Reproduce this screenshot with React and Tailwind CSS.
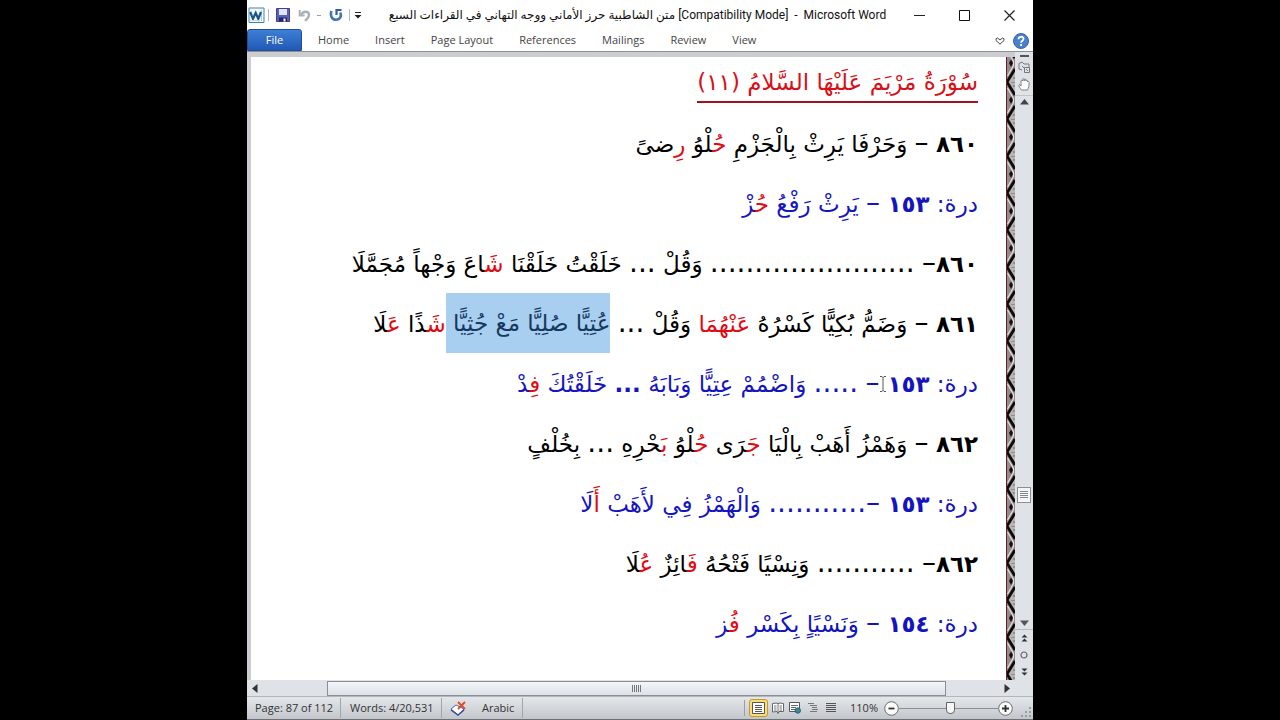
import { useState } from 'react';

const TABS = ['Home', 'Insert', 'Page Layout', 'References', 'Mailings', 'Review', 'View'];

// [text, tone]: tone is 'red' for the symbol letters, 'sel' for the selected words
const VERSES = [
  { color: 'black', parts: [['٨٦٠ – وَحَرْفَا يَرِثْ بِالْجَزْمِ '], ['حُ', 'red'], ['لْوُ '], ['رِ', 'red'], ['ضىً']] },
  { color: 'blue', parts: [['درة: ١٥٣ – يَرِثْ رَفْعُ '], ['حُ', 'red'], ['زْ']] },
  { color: 'black', parts: [['٨٦٠– ....................... وَقُلْ ... خَلَقْتُ خَلَقْنَا '], ['شَ', 'red'], ['اعَ وَجْهاً مُجَمَّلَا']] },
  { color: 'black', parts: [['٨٦١ – وَضَمُّ بُكِيًّا كَسْرُهُ '], ['عَنْهُمَا', 'red'], [' وَقُلْ ... '], ['عُتِيًّا صُلِيًّا مَعْ جُثِيًّا ', 'sel'], ['شَ', 'red'], ['ذًا '], ['عَ', 'red'], ['لَا']] },
  { color: 'blue', parts: [['درة: ١٥٣'], ['', 'cursor'], ['– ..... وَاضْمُمْ عِتِيًّا وَبَابَهُ '], ['...', 'bold'], [' خَلَقْتُكَ '], ['فِ', 'red'], ['دْ']] },
  { color: 'black', parts: [['٨٦٢ – وَهَمْزُ أَهَبْ بِالْيَا '], ['جَ', 'red'], ['رَى '], ['حُ', 'red'], ['لْوُ '], ['بَ', 'red'], ['حْرِهِ ... بِخُلْفٍ']] },
  { color: 'blue', parts: [['درة: ١٥٣ –........... وَالْهَمْزُ فِي لأَهَبْ '], ['أَ', 'red'], ['لَا']] },
  { color: 'black', parts: [['٨٦٢– ........... وَنِسْيًا فَتْحُهُ '], ['فَ', 'red'], ['ائِزٌ '], ['عُ', 'red'], ['لَا']] },
  { color: 'blue', parts: [['درة: ١٥٤ – وَنَسْيًاٍ بِكَسْر '], ['فُ', 'red'], ['ز']] },
];

function WordLogo() {
  return (
    <svg width="17" height="17" viewBox="0 0 17 17">
      <path d="M1 1h15v14.500H1z" fill="#f4fafd" stroke="#3f86b0" />
      <path d="M13.500 3v11" stroke="#a9cbe0" />
      <path d="M2.200 5 5 11.800 7.700 6 10.300 11.800 13 5" fill="none" stroke="#17578c" strokeWidth="2.200" />
      <path d="M2 13.500h10" stroke="#c7deec" />
    </svg>
  );
}

function SaveIcon() {
  return (
    <svg width="14" height="14" viewBox="0 0 14 14">
      <path d="M.5.5h13v13h-13z" fill="#5a5fb5" stroke="#3f4190" />
      <path d="M3 1h8v6H3z" fill="#dfe5f5" />
      <path d="M3 9.500h8v4H3z" fill="#23265c" />
      <path d="M7.500 10.500h2v3h-2z" fill="#fff" />
    </svg>
  );
}

function UndoIcon() {
  return (
    <svg width="13" height="13" viewBox="0 0 13 13" fill="none" stroke="#abafb7" strokeWidth="2.400">
      <path d="M3 6C5 2 10.500 1.500 11 5.500c.2 2.600-2 4.500-4 6.300" />
      <path d="M1.700 1v5.500h5" strokeWidth="2" />
    </svg>
  );
}

function RedoIcon() {
  return (
    <svg width="14" height="14" viewBox="0 0 14 14" fill="none" stroke="#4473b5" strokeWidth="2.600">
      <path d="M2.500 3C.8 7.500 3 11.700 7 11.700s6-3.700 4.200-7.200" />
      <path d="M12.500 2H7.500v5" stroke="#2f5e9f" strokeWidth="2.200" />
    </svg>
  );
}

function TitleBar() {
  return (
    <header className="flex h-[30px] shrink-0 items-center bg-white pl-[1px]">
      <div className="flex w-[120px] shrink-0 items-center">
        <WordLogo />
        <span className="ml-[3px] h-3 w-px bg-[#b5b8bd]" />
        <button className="ml-[7px]" aria-label="Save"><SaveIcon /></button>
        <button className="ml-2" aria-label="Undo"><UndoIcon /></button>
        <span className="ml-[6px] h-px w-1 bg-[#9a9da3]" />
        <button className="ml-2" aria-label="Repeat"><RedoIcon /></button>
        <span className="ml-[6px] h-3 w-px bg-[#b5b8bd]" />
        <button className="ml-1" aria-label="Customize Quick Access Toolbar">
          <svg width="8" height="8" viewBox="0 0 8 8"><path d="M1 1h6v1H1zM.5 4h7L4 7.500z" fill="#222" /></svg>
        </button>
      </div>
      <h1 className="min-w-0 flex-1 whitespace-nowrap pl-2 text-center font-[Roboto,'DejaVu_Sans',sans-serif] text-[12px] leading-4 text-[#111]">
        متن الشاطبية حرز الأماني ووجه التهاني في القراءات السبع [Compatibility Mode]&nbsp; -&nbsp; Microsoft Word
      </h1>
      <div className="flex w-[134px] shrink-0 items-center justify-end gap-[34px] pr-[18px]">
        <button aria-label="Minimize"><svg width="11" height="11" viewBox="0 0 11 11"><path d="M0 5.500h11" stroke="#222" /></svg></button>
        <button aria-label="Maximize"><svg width="11" height="11" viewBox="0 0 11 11"><path d="M.5.5h10v10H.5z" fill="none" stroke="#111" /></svg></button>
        <button aria-label="Close"><svg width="11" height="11" viewBox="0 0 11 11"><path d="m.5.5 10 10M10.500.5l-10 10" stroke="#222" strokeWidth="1.200" /></svg></button>
      </div>
    </header>
  );
}

function Ribbon() {
  return (
    <nav className="flex h-[22px] shrink-0 items-stretch border-b border-[#8d9095] bg-white text-[11px] text-[#444]">
      <button className="mt-[-1px] w-[55px] rounded-t-[3px] border border-[#1d4e9e] bg-linear-to-b from-[#3f7fd6] to-[#2159b5] text-white">File</button>
      <div className="flex flex-1 items-center gap-[26px] pl-4">
        {TABS.map((tab) => (
          <button key={tab} className="whitespace-nowrap">{tab}</button>
        ))}
      </div>
      <div className="flex items-center gap-2 pr-1">
        <button aria-label="Minimize the Ribbon">
          <svg width="10" height="8" viewBox="0 0 10 8"><path d="M5 7.200 1 3.500Q.5 1 2.700 1L5 3l2.300-2Q9.500 1 9 3.500z" fill="#fff" stroke="#444" /></svg>
        </button>
        <button aria-label="Help">
          <svg width="16" height="16" viewBox="0 0 16 16">
            <circle cx="8" cy="8" r="7.500" fill="#4a80cb" stroke="#3565a8" />
            <path d="M5.500 6.200C5.500 3 10.700 3 10.500 6c-.1 1.700-2.400 1.800-2.400 3.800M8.100 11v2" fill="none" stroke="#fff" strokeWidth="1.800" />
          </svg>
        </button>
      </div>
    </nav>
  );
}

function PageBorder() {
  return (
    <svg className="w-[9px] shrink-0 self-stretch" aria-hidden="true">
      <defs>
        <pattern id="braid" width="9" height="37" patternUnits="userSpaceOnUse" patternTransform="translate(0 25)">
          <rect width="9" height="37" fill="#958b8d" />
          <path d="M2 0 9 11V0zM2 37l7-11v11z" fill="#b9b4b5" />
          <path d="m1 0 8 13M1 37l8-13" stroke="#0c0c0c" strokeWidth="2.800" />
          <path d="M1.500 6 7.500 16.500v4L1.500 31" fill="none" stroke="#e6e2e2" strokeWidth="1.100" />
          <path d="M5 14.500 7 18l-2 4-2-4z" fill="#171012" />
          <path d="M5 0h4M7 4h2M7 33h2" stroke="#6e6668" />
        </pattern>
      </defs>
      <rect width="100%" height="100%" fill="url(#braid)" />
      <path d="M.5 0v2000" stroke="#6b1f28" />
    </svg>
  );
}

// Verse numbers are bold, dashes and dot leaders are set larger than the verse itself
function Rich({ text }) {
  return text.split(/([٠-٩]+|–|\.{3,})/).map((piece, i) => {
    if (i % 2 === 0) return piece;
    const isNumber = piece !== '–' && piece[0] !== '.';
    return <span key={i} className={isNumber ? 'font-bold' : 'text-[28px]'}>{piece}</span>;
  });
}

function Part({ text, tone }) {
  if (tone === 'red') return <span className="text-[#e00b12]">{text}</span>;
  if (tone === 'bold') return <b>{text}</b>;
  if (tone === 'sel') return <mark className="inline-block h-[60px] whitespace-pre bg-[#a8cef0] align-top text-[#16395f]">{text}</mark>;
  if (tone === 'cursor') {
    return (
      <span className="relative inline-block w-2">
        <svg className="absolute bottom-0 left-0 h-4 w-2" viewBox="0 0 8 16" fill="none" stroke="#555">
          <path d="M1 .5h2l1 1 1-1h2M4 1v14M1 15.500h2l1-1 1 1h2" />
        </svg>
      </span>
    );
  }
  return <Rich text={text} />;
}

function Verse({ color, parts }) {
  return (
    <p className={color === 'blue' ? 'h-[60px] text-[#1414c0]' : 'h-[60px] text-black'}>
      {parts.map(([text, tone], i) => <Part key={i} text={text} tone={tone} />)}
    </p>
  );
}

function ScrollRail() {
  return (
    <aside className="flex w-[18px] shrink-0 flex-col items-center bg-[#dfe2e6] pb-1">
      <span className="mt-[3px] h-[2px] w-[9px] bg-[#555]" />
      <svg className="mt-1" width="13" height="13" viewBox="0 0 13 13" fill="none" stroke="#777">
        <path d="M1 2.500 4 1l2 2h5v4M1 2.500V8l3 1M6.500 6.500h5v5h-5zM4 5l3 3M8 8l2 2" />
      </svg>
      <svg className="mt-1" width="13" height="13" viewBox="0 0 13 13" fill="#fff" stroke="#777" strokeWidth=".9">
        <path d="M3.500 12C2 10 .5 8 1 7s1.500 0 2 1V3c0-1 1.500-1 1.500 0V1.500c0-1 1.700-1 1.700 0V3 1.700c0-1 1.700-1 1.700 0V3c0-1 1.600-1 1.600 0v1c0-1 1.600-.7 1.600.3 0 4-.5 5.500-1.600 7.700z" />
      </svg>
      <span className="mt-1 h-px w-full bg-[#c2c5c9]" />
      <button className="mt-[3px]" aria-label="Scroll up"><svg width="9" height="6" viewBox="0 0 9 6"><path d="M0 5.500h9L4.500 0z" fill="#444" /></svg></button>
      <div className="flex w-full flex-1 flex-col items-center">
        <span className="flex-[75]" />
        <button className="flex h-4 w-[14px] items-center justify-center border border-[#8b8f95] bg-[#f4f5f7]" aria-label="Scroll position">
          <svg width="8" height="8" viewBox="0 0 8 8"><path d="M0 .5h8M0 2.500h8M0 4.500h8M0 6.500h8" stroke="#888" /></svg>
        </button>
        <span className="flex-[23]" />
      </div>
      <button aria-label="Scroll down"><svg width="9" height="6" viewBox="0 0 9 6"><path d="M0 .5h9L4.500 6z" fill="#555" /></svg></button>
      <span className="mt-[3px] h-px w-full bg-[#b8bbc0]" />
      <button className="mt-1" aria-label="Previous page"><svg width="7" height="8" viewBox="0 0 7 8"><path d="M.5 3.500h6L3.500.5zM.5 7.500h6l-3-3z" fill="#333" /></svg></button>
      <button className="mt-[9px]" aria-label="Select browse object"><svg width="8" height="8" viewBox="0 0 8 8"><circle cx="4" cy="4" r="3" fill="none" stroke="#666" strokeWidth="1.200" /></svg></button>
      <button className="mt-[9px]" aria-label="Next page"><svg width="7" height="8" viewBox="0 0 7 8"><path d="M.5.5h6l-3 3zM.5 4.500h6l-3 3z" fill="#333" /></svg></button>
    </aside>
  );
}

function HorizontalScroll() {
  return (
    <div className="flex h-[17px] shrink-0 items-center border-b border-[#b3b6ba] bg-[#dfe2e6] pr-[18px]">
      <button className="ml-[5px]" aria-label="Scroll left"><svg width="6" height="9" viewBox="0 0 6 9"><path d="M5.500 0v9L0 4.500z" fill="#333" /></svg></button>
      <span className="flex-[69]" />
      <button className="flex h-[15px] flex-[618] items-center justify-center border border-[#8b8f95] bg-linear-to-b from-[#f4f6f9] to-[#dce2e9]" aria-label="Horizontal scroll position">
        <svg width="9" height="7" viewBox="0 0 9 7"><path d="M.5 0v7M2.500 0v7M4.500 0v7M6.500 0v7M8.500 0v7" stroke="#777" /></svg>
      </button>
      <span className="flex-[58]" />
      <button className="mr-[5px]" aria-label="Scroll right"><svg width="6" height="9" viewBox="0 0 6 9"><path d="M.5 0v9L6 4.500z" fill="#333" /></svg></button>
    </div>
  );
}

function ViewButtons() {
  return (
    <div className="flex items-center">
      <button className="flex h-[18px] w-[19px] items-center justify-center rounded-[3px] border border-[#c29a2e] bg-[#fbdc7a]" aria-label="Print Layout">
        <svg width="13" height="12" viewBox="0 0 13 12"><path d="M.5.5h12v11H.5z" fill="#fff" stroke="#555" /><path d="M3 3.500h7M3 5.500h7M3 7.500h7M3 9.500h7" stroke="#555" /></svg>
      </button>
      <button className="ml-1" aria-label="Full Screen Reading">
        <svg width="12" height="12" viewBox="0 0 12 12"><path d="M.5 1.500 5 1l1 1 1-1 4.500.5v8L7 9.500l-1 2-1-2-4.500.5z" fill="#fff" stroke="#666" /><path d="M6 2v8M2 4h2.500M2 6h2.500M7.500 4H10M7.500 6H10M2 8h2.500M7.500 8H10" stroke="#777" /></svg>
      </button>
      <button className="ml-[5px]" aria-label="Web Layout">
        <svg width="12" height="12" viewBox="0 0 12 12"><path d="M.5.5h10v9H.5z" fill="#fff" stroke="#555" /><path d="M2 3.500h7M2 5.500h5M2 7.500h4" stroke="#666" /><circle cx="8.800" cy="8.500" r="2.700" fill="#3b8a8a" stroke="#2b5f8f" /></svg>
      </button>
      <button className="ml-[7px]" aria-label="Outline">
        <svg width="10" height="10" viewBox="0 0 10 10"><path d="M0 .5h6M2 2.500h7M4 4.500h5M4 6.500h6M2 8.500h7" stroke="#777" /></svg>
      </button>
      <button className="ml-2" aria-label="Draft">
        <svg width="10" height="10" viewBox="0 0 10 10"><path d="M0 .5h10M0 2.500h10M0 4.500h10M0 6.500h10M0 8.500h10" stroke="#555" /></svg>
      </button>
    </div>
  );
}

function ZoomStep({ label, d, onClick }) {
  return (
    <button onClick={onClick} aria-label={label}>
      <svg width="15" height="15" viewBox="0 0 15 15">
        <circle cx="7.500" cy="7.500" r="6.800" fill="#fbfbfc" stroke="#6a6d72" />
        <path d={d} stroke="#333" strokeWidth="1.800" />
      </svg>
    </button>
  );
}

function StatusBar() {
  const [zoom, setZoom] = useState(110);
  return (
    <footer className="flex h-[22px] shrink-0 items-center bg-linear-to-b from-[#e4e7ea] to-[#c3c7cc] text-[11px] text-[#333]">
      <span className="w-[94px] whitespace-nowrap border-r border-[#a2a5aa] pl-2 leading-5">Page: 87 of 112</span>
      <span className="w-[101px] whitespace-nowrap border-r border-[#a2a5aa] pl-[9px] leading-5">Words: 4/20,531</span>
      <button className="ml-2" aria-label="Proofing errors">
        <svg width="17" height="15" viewBox="0 0 17 15">
          <path d="M1 8 6 4l8 4-6 6z" fill="#fff" stroke="#5564a8" />
          <path d="m1 9 7 5 6-5" fill="none" stroke="#3d4c9a" strokeWidth="1.500" />
          <path d="m8 1 7 7M15 1 8 8" stroke="#dd4a2c" strokeWidth="1.800" />
        </svg>
      </button>
      <span className="ml-[15px] border-r border-[#a2a5aa] pr-2 leading-5">Arabic</span>
      <span className="flex-1" />
      <span className="mr-1 h-4 w-px bg-[#9a9da3]" />
      <ViewButtons />
      <label htmlFor="zoom" className="ml-[14px] w-[34px] whitespace-nowrap">{zoom}%</label>
      <ZoomStep label="Zoom out" d="M4.500 7.500h6" onClick={() => setZoom(Math.max(10, zoom - 10))} />
      <input
        id="zoom"
        type="range"
        min="10"
        max="200"
        value={zoom}
        onChange={(e) => setZoom(Number(e.target.value))}
        className="h-4 w-[99px] appearance-none bg-[linear-gradient(#8c9095,#8c9095)] bg-size-[100%_1px] bg-center bg-no-repeat [&::-webkit-slider-thumb]:h-3 [&::-webkit-slider-thumb]:w-[9px] [&::-webkit-slider-thumb]:appearance-none [&::-webkit-slider-thumb]:rounded-b-[4px] [&::-webkit-slider-thumb]:border [&::-webkit-slider-thumb]:border-[#666] [&::-webkit-slider-thumb]:bg-[#f6f6f7]"
      />
      <ZoomStep label="Zoom in" d="M4 7.500h7M7.500 4v7" onClick={() => setZoom(Math.min(200, zoom + 10))} />
      <svg className="ml-[7px] mr-px self-end" width="12" height="12" viewBox="0 0 12 12" fill="#999ca1">
        <path d="M9 0h2v2H9zM5 4h2v2H5zM9 4h2v2H9zM1 8h2v2H1zM5 8h2v2H5zM9 8h2v2H9z" />
      </svg>
    </footer>
  );
}

export default function App() {
  return (
    <div className="flex min-h-screen justify-center bg-black font-['Open_Sans','DejaVu_Sans',sans-serif]">
      <div className="flex w-full max-w-[786px] flex-col border-b border-[#6d7074] bg-white">
        <TitleBar />
        <Ribbon />
        <div className="flex flex-1">
          <div className="flex min-w-0 flex-1 flex-col border-l-4 border-t-[5px] border-[#cbcdd1]">
            <div className="flex flex-1 bg-white">
              <main dir="rtl" lang="ar" className="min-w-0 flex-1 whitespace-nowrap pr-7 font-['DejaVu_Sans',sans-serif] text-[23px] leading-[60px]">
                <div className="h-14">
                  <h2 className="inline-block h-[46px] border-b-2 border-[#a3121c] align-top leading-[50px] text-[#d81018]">سُوْرَةُ مَرْيَمَ عَلَيْهَا السَّلامُ (١١)</h2>
                </div>
                {VERSES.map((verse, i) => <Verse key={i} {...verse} />)}
              </main>
              <PageBorder />
            </div>
          </div>
          <ScrollRail />
        </div>
        <HorizontalScroll />
        <StatusBar />
      </div>
    </div>
  );
}
